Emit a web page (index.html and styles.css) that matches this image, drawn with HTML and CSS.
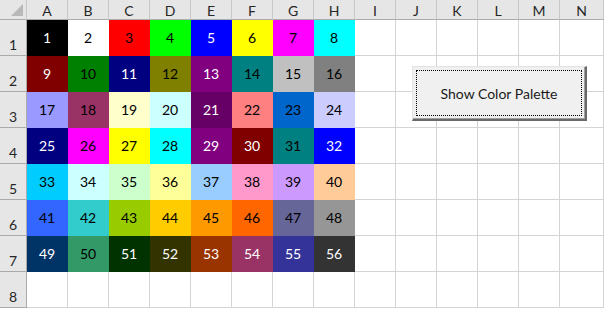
FILE: index.html
```html
<!DOCTYPE html>
<html lang="en">
<head>
    <meta charset="UTF-8">
    <title>Color Palette</title>
    <link rel="stylesheet" href="styles.css">
</head>
<body>

<div class="sheet" id="sheet">
    <div class="corner"></div>
</div>

<button class="palette-btn"><span>Show Color Palette</span></button>

<script>
    const colors = [
        '#000000', '#FFFFFF', '#FF0000', '#00FF00', '#0000FF', '#FFFF00', '#FF00FF', '#00FFFF',
        '#800000', '#008000', '#000080', '#808000', '#800080', '#008080', '#C0C0C0', '#808080',
        '#9999FF', '#993366', '#FFFFCC', '#CCFFFF', '#660066', '#FF8080', '#0066CC', '#CCCCFF',
        '#000080', '#FF00FF', '#FFFF00', '#00FFFF', '#800080', '#800000', '#008080', '#0000FF',
        '#00CCFF', '#CCFFFF', '#CCFFCC', '#FFFF99', '#99CCFF', '#FF99CC', '#CC99FF', '#FFCC99',
        '#3366FF', '#33CCCC', '#99CC00', '#FFCC00', '#FF9900', '#FF6600', '#666699', '#969696',
        '#003366', '#339966', '#003300', '#333300', '#993300', '#993366', '#333399', '#333333'
    ];
    // numbers written in white
    const light = [1, 5, 9, 11, 13, 21, 25, 29, 30, 32, 49, 51, 52, 53, 54, 55, 56];
    const letters = 'ABCDEFGHIJKLMN';

    const sheet = document.getElementById('sheet');

    for (const letter of letters) {
        const head = document.createElement('div');
        head.className = 'cell colhead';
        head.textContent = letter;
        sheet.appendChild(head);
    }

    for (let row = 1; row <= 8; row++) {
        const head = document.createElement('div');
        head.className = 'cell rowhead';
        head.textContent = row;
        sheet.appendChild(head);

        for (let col = 1; col <= 14; col++) {
            const cell = document.createElement('div');
            cell.className = 'cell';
            const index = (row - 1) * 8 + col;
            if (row <= 7 && col <= 8) {
                cell.classList.add('filled');
                if (light.includes(index)) cell.classList.add('light');
                cell.style.setProperty('--fill', colors[index - 1]);
                cell.textContent = index;
            }
            sheet.appendChild(cell);
        }
    }
</script>

</body>
</html>
```

FILE: styles.css
```css
body {
    margin: 0;
    font-family: Lato, "Liberation Sans", sans-serif;
    font-size: 14px;
    color: #1a1a1a;
    background-color: #ffffff;
}

.sheet {
    display: grid;
    grid-template-columns: 27px repeat(13, 41px) 1fr;
    grid-template-rows: 20px repeat(8, 36px);
    width: 604px;
}

.cell {
    box-sizing: border-box;
    display: flex;
    align-items: center;
    justify-content: center;
    border-right: 1px solid #d4d4d4;
    border-bottom: 1px solid #d4d4d4;
}

.corner {
    position: relative;
    background-color: #e6e6e6;
    border-right: 1px solid #c8c8c8;
    border-bottom: 1px solid #ababab;
}

.corner::after {
    content: "";
    position: absolute;
    left: 11px;
    top: 4px;
    width: 12px;
    height: 12px;
    background-color: #b8b8b8;
    clip-path: polygon(100% 0, 100% 100%, 0 100%);
}

.colhead {
    background-color: #e6e6e6;
    border-right-color: #c8c8c8;
    border-bottom-color: #ababab;
    color: #262626;
    padding-top: 1px;
}

.rowhead {
    background-color: #e6e6e6;
    border-right-color: #ababab;
    border-bottom-color: #ababab;
    color: #262626;
    align-items: flex-end;
    padding-bottom: 2px;
}

.filled {
    background-color: var(--fill);
    border-color: var(--fill);
    color: #000000;
}

.filled.light {
    color: #ffffff;
}

.palette-btn {
    position: absolute;
    left: 412px;
    top: 66px;
    width: 175px;
    height: 55px;
    box-sizing: border-box;
    padding: 3px;
    margin: 0;
    background-color: #f0f0f0;
    border-style: solid;
    border-width: 1px 2px 2px 1px;
    border-color: #e3e3e3 #696969 #696969 #e3e3e3;
    box-shadow: inset -1px -1px 0 #a0a0a0;
    font-family: Lato, "Liberation Sans", sans-serif;
    font-size: 14px;
    color: #1a1a1a;
}

.palette-btn span {
    display: flex;
    align-items: center;
    justify-content: center;
    height: 100%;
    box-sizing: border-box;
    border: 1px dotted #000000;
}
```
